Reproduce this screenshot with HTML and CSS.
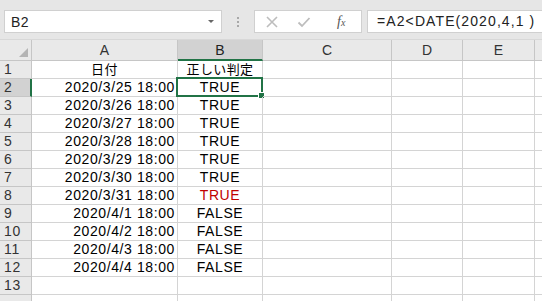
FILE: index.html
```html
<!DOCTYPE html>
<html lang="ja">
<head>
    <meta charset="UTF-8">
    <title>Sheet1</title>
    <link rel="stylesheet" href="styles.css">
</head>
<body>
    <!-- Formula bar -->
    <div class="formula-bar">
        <div class="name-box">
            <span class="cell-ref">B2</span>
            <span class="drop-arrow"></span>
        </div>
        <div class="grip">
            <span></span><span></span><span></span>
        </div>
        <div class="func-buttons">
            <svg class="icon" width="14" height="14" viewBox="0 0 14 14">
                <path d="M2 2 L12 12 M12 2 L2 12" stroke="#bdbdbd" stroke-width="1.6" fill="none"/>
            </svg>
            <svg class="icon" width="14" height="14" viewBox="0 0 14 14">
                <path d="M1.5 7.5 L5 11 L12.5 3" stroke="#bdbdbd" stroke-width="1.8" fill="none"/>
            </svg>
            <span class="fx">f<small>x</small></span>
        </div>
        <div class="formula-input">=A2&lt;DATE(2020,4,1 )</div>
    </div>

    <!-- Sheet grid -->
    <div class="sheet">
        <div class="corner"><span class="corner-mark"></span></div>
        <div class="col-head">A</div>
        <div class="col-head active">B</div>
        <div class="col-head">C</div>
        <div class="col-head">D</div>
        <div class="col-head">E</div>
        <div class="col-head last"></div>

        <div class="row-head">1</div>
        <div class="cell center jp">日付</div>
        <div class="cell center jp">正しい判定</div>
        <div class="cell"></div><div class="cell"></div><div class="cell"></div><div class="cell last"></div>

        <div class="row-head active">2</div>
        <div class="cell num">2020/3/25 18:00</div>
        <div class="cell center selected">TRUE<span class="sel-box"><span class="handle"></span></span></div>
        <div class="cell"></div><div class="cell"></div><div class="cell"></div><div class="cell last"></div>

        <div class="row-head">3</div>
        <div class="cell num">2020/3/26 18:00</div>
        <div class="cell center">TRUE</div>
        <div class="cell"></div><div class="cell"></div><div class="cell"></div><div class="cell last"></div>

        <div class="row-head">4</div>
        <div class="cell num">2020/3/27 18:00</div>
        <div class="cell center">TRUE</div>
        <div class="cell"></div><div class="cell"></div><div class="cell"></div><div class="cell last"></div>

        <div class="row-head">5</div>
        <div class="cell num">2020/3/28 18:00</div>
        <div class="cell center">TRUE</div>
        <div class="cell"></div><div class="cell"></div><div class="cell"></div><div class="cell last"></div>

        <div class="row-head">6</div>
        <div class="cell num">2020/3/29 18:00</div>
        <div class="cell center">TRUE</div>
        <div class="cell"></div><div class="cell"></div><div class="cell"></div><div class="cell last"></div>

        <div class="row-head">7</div>
        <div class="cell num">2020/3/30 18:00</div>
        <div class="cell center">TRUE</div>
        <div class="cell"></div><div class="cell"></div><div class="cell"></div><div class="cell last"></div>

        <div class="row-head">8</div>
        <div class="cell num">2020/3/31 18:00</div>
        <div class="cell center red">TRUE</div>
        <div class="cell"></div><div class="cell"></div><div class="cell"></div><div class="cell last"></div>

        <div class="row-head">9</div>
        <div class="cell num">2020/4/1 18:00</div>
        <div class="cell center">FALSE</div>
        <div class="cell"></div><div class="cell"></div><div class="cell"></div><div class="cell last"></div>

        <div class="row-head">10</div>
        <div class="cell num">2020/4/2 18:00</div>
        <div class="cell center">FALSE</div>
        <div class="cell"></div><div class="cell"></div><div class="cell"></div><div class="cell last"></div>

        <div class="row-head">11</div>
        <div class="cell num">2020/4/3 18:00</div>
        <div class="cell center">FALSE</div>
        <div class="cell"></div><div class="cell"></div><div class="cell"></div><div class="cell last"></div>

        <div class="row-head">12</div>
        <div class="cell num">2020/4/4 18:00</div>
        <div class="cell center">FALSE</div>
        <div class="cell"></div><div class="cell"></div><div class="cell"></div><div class="cell last"></div>

        <div class="row-head">13</div>
        <div class="cell"></div>
        <div class="cell"></div>
        <div class="cell"></div><div class="cell"></div><div class="cell"></div><div class="cell last"></div>

        <div class="row-head"></div>
        <div class="cell"></div>
        <div class="cell"></div>
        <div class="cell"></div><div class="cell"></div><div class="cell"></div><div class="cell last"></div>
    </div>
</body>
</html>
```

FILE: styles.css
```css
body {
    margin: 0;
    background-color: #e6e6e6;
    font-family: "Liberation Sans", "Noto Sans CJK JP", sans-serif;
    color: #000;
    overflow: hidden;
}

/* Formula bar */
.formula-bar {
    display: flex;
    align-items: center;
    height: 40px;
    padding-top: 3px;
    box-sizing: border-box;
}

.name-box {
    margin-left: 4px;
    width: 218px;
    height: 23px;
    box-sizing: border-box;
    background-color: #fff;
    border: 1px solid #d0d0d0;
    display: flex;
    align-items: center;
    justify-content: space-between;
    padding: 0 7px 0 6px;
    font-size: 14px;
    letter-spacing: 0.4px;
    color: #222;
}

.drop-arrow {
    width: 0;
    height: 0;
    border-left: 3px solid transparent;
    border-right: 3px solid transparent;
    border-top: 3px solid #666;
}

.grip {
    width: 32px;
    display: flex;
    flex-direction: column;
    align-items: center;
    gap: 2px;
}

.grip span {
    width: 2px;
    height: 2px;
    background-color: #a8a8a8;
}

.func-buttons {
    width: 108px;
    height: 23px;
    box-sizing: border-box;
    background-color: #fff;
    border: 1px solid #d0d0d0;
    display: flex;
    align-items: center;
    padding-left: 10px;
}

.icon {
    margin-right: 18px;
}

.func-buttons .icon + .icon {
    margin-right: 26px;
}

.fx {
    font-family: "Liberation Serif", serif;
    font-style: italic;
    font-size: 14px;
    color: #555;
}

.fx small {
    font-size: 10px;
}

.formula-input {
    margin-left: 5px;
    flex: 1;
    height: 23px;
    box-sizing: border-box;
    background-color: #fff;
    border: 1px solid #d0d0d0;
    border-right: none;
    padding-left: 9px;
    font-size: 14px;
    letter-spacing: 1.1px;
    line-height: 21px;
    color: #222;
    white-space: pre;
}

/* Sheet */
.sheet {
    display: grid;
    grid-template-columns: 32px 146px 85px 129px 71px 72px 7px;
    grid-template-rows: 21px repeat(14, 18px);
    background-color: #fff;
    border-top: 1px solid #d8d8d8;
    margin-top: -1px;
}

.corner,
.col-head,
.row-head {
    background-color: #e9e9e9;
    box-sizing: border-box;
    border-right: 1px solid #c6c6c6;
    border-bottom: 1px solid #c6c6c6;
    color: #333;
    font-size: 14px;
}

.corner {
    position: relative;
}

.corner-mark {
    position: absolute;
    right: 3px;
    bottom: 3px;
    width: 0;
    height: 0;
    border-left: 9px solid transparent;
    border-bottom: 9px solid #b4b4b4;
}

.col-head {
    text-align: center;
    line-height: 20px;
}

.col-head.active {
    background-color: #d2d2d2;
    border-bottom: 2px solid #217346;
    color: #222;
}

.row-head {
    padding-left: 4px;
    line-height: 17px;
    letter-spacing: 0.8px;
}

.row-head.active {
    background-color: #d2d2d2;
    border-right: 2px solid #217346;
}

.cell {
    box-sizing: border-box;
    border-right: 1px solid #d4d4d4;
    border-bottom: 1px solid #d4d4d4;
    font-size: 14px;
    letter-spacing: 0.6px;
    line-height: 17px;
    white-space: nowrap;
    position: relative;
}

.cell.jp {
    font-size: 13px;
    letter-spacing: 0.4px;
}

.col-head.last,
.cell.last {
    border-right: none;
}

.num {
    text-align: right;
    padding-right: 2px;
}

.center {
    text-align: center;
}

.red {
    color: #c00000;
}

/* Selection outline on the active cell */
.sel-box {
    position: absolute;
    left: -2px;
    top: -2px;
    right: -1px;
    bottom: -1px;
    border: 2px solid #217346;
}

.handle {
    position: absolute;
    right: -4px;
    bottom: -4px;
    width: 5px;
    height: 5px;
    background-color: #217346;
    border: 1px solid #fff;
}
```
